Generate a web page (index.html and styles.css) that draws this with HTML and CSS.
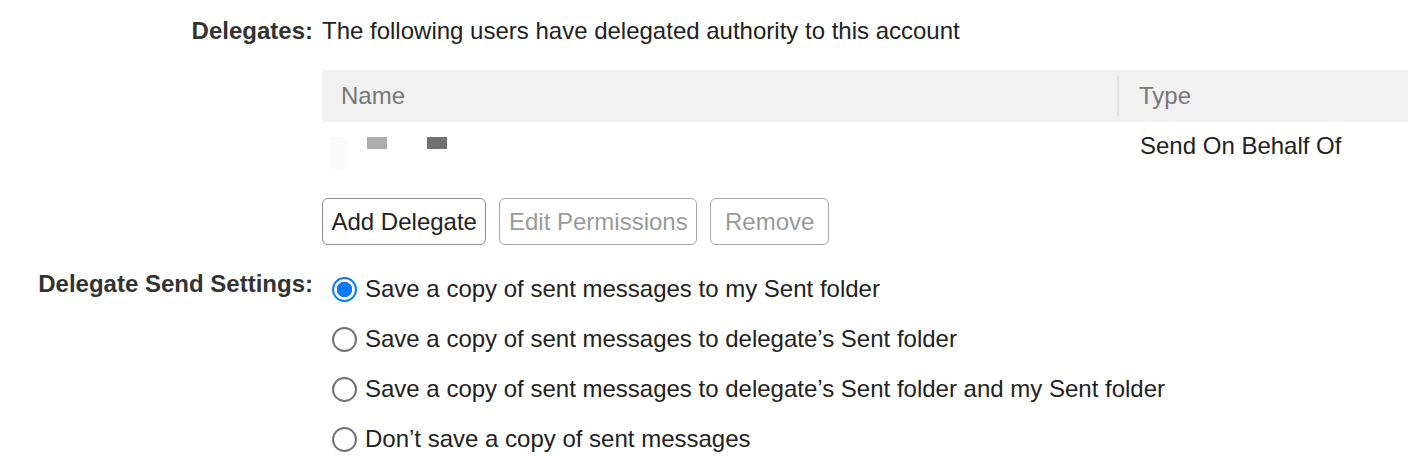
FILE: index.html
```html
<!DOCTYPE html>
<html lang="en">
<head>
<meta charset="utf-8">
<title>Delegates</title>
<link rel="stylesheet" href="styles.css">
</head>
<body>
<div class="settings">
  <div class="field">
    <div class="field-label">Delegates:</div>
    <div class="field-body">
      <div class="intro">The following users have delegated authority to this account</div>
      <div class="table">
        <div class="thead">
          <div class="th th-name">Name</div>
          <div class="th th-type">Type</div>
        </div>
        <div class="trow">
          <div class="td td-name">
            <span class="mask mask-faint"></span>
            <span class="mask mask-light"></span>
            <span class="mask mask-dark"></span>
          </div>
          <div class="td td-type">Send On Behalf Of</div>
        </div>
      </div>
      <div class="actions">
        <button class="btn" type="button">Add Delegate</button>
        <button class="btn" type="button" disabled>Edit Permissions</button>
        <button class="btn btn-remove" type="button" disabled>Remove</button>
      </div>
    </div>
  </div>
  <div class="field field-send">
    <div class="field-label">Delegate Send Settings:</div>
    <div class="field-body options">
      <label class="option"><input type="radio" name="send" checked><span>Save a copy of sent messages to my Sent folder</span></label>
      <label class="option"><input type="radio" name="send"><span>Save a copy of sent messages to delegate’s Sent folder</span></label>
      <label class="option"><input type="radio" name="send"><span>Save a copy of sent messages to delegate’s Sent folder and my Sent folder</span></label>
      <label class="option"><input type="radio" name="send"><span>Don’t save a copy of sent messages</span></label>
    </div>
  </div>
</div>
</body>
</html>
```
FILE: styles.css
```css
* { box-sizing: border-box; }

html, body {
  margin: 0;
  background: #fff;
}

body {
  font-family: "Liberation Sans", Arial, Helvetica, sans-serif;
  font-size: 24px;
  color: #222;
  overflow: hidden;
}

.settings {
  padding-top: 17px;
}

.field {
  display: grid;
  grid-template-columns: 313px 1fr;
  column-gap: 9px;
}

.field-label {
  text-align: right;
  font-weight: bold;
  color: #333;
  line-height: 28px;
}

.field-body {
  min-width: 0;
}

.intro {
  line-height: 28px;
}

/* delegate list */
.table {
  margin-top: 25px;
}

.thead {
  display: flex;
  height: 52px;
  background: #f1f1f1;
  align-items: center;
}

.th {
  color: #777;
  line-height: 28px;
}

.th-name {
  width: 797px;
  padding-left: 19px;
  align-self: stretch;
  display: flex;
  align-items: center;
  border-right: 2px solid #e3e3e3;
  margin: 6px 0;
}

.th-type {
  padding-left: 20px;
}

.trow {
  display: flex;
  height: 48px;
  align-items: center;
}

.td-name {
  width: 797px;
  align-self: stretch;
  position: relative;
}

.td-type {
  padding-left: 21px;
  line-height: 28px;
}

/* redacted name */
.mask {
  position: absolute;
  display: block;
}

.mask-faint {
  left: 8px;
  top: 15px;
  width: 18px;
  height: 32px;
  background: #fafafa;
}

.mask-light {
  left: 45px;
  top: 15px;
  width: 20px;
  height: 12px;
  background: #adadad;
}

.mask-dark {
  left: 105px;
  top: 15px;
  width: 20px;
  height: 12px;
  background: #717171;
}

/* buttons */
.actions {
  display: flex;
  gap: 13px;
  margin-top: 28px;
}

.btn {
  font: inherit;
  height: 47px;
  padding: 0 8.5px;
  border: 1.5px solid #8e8e8e;
  border-radius: 6px;
  background: #fff;
  color: #222;
}

.btn:disabled {
  color: #9a9a9a;
  border-color: #a8a8a8;
}

.btn-remove {
  min-width: 119px;
}

/* send settings */
.field-send {
  margin-top: 19px;
}

.field-send .field-label {
  padding-top: 6px;
}

.options {
  display: flex;
  flex-direction: column;
}

.option {
  display: flex;
  align-items: center;
  height: 50px;
  gap: 8px;
  padding-left: 10px;
}

.option span {
  line-height: 28px;
}

.option input {
  appearance: none;
  -webkit-appearance: none;
  margin: 0;
  width: 25px;
  height: 25px;
  border-radius: 50%;
  border: 2px solid #727272;
  background: #fff;
  flex: none;
}

.option input:checked {
  border: 2.5px solid #0a7aff;
  background: radial-gradient(circle, #0a7aff 0 7.5px, #fff 8px);
}
```
